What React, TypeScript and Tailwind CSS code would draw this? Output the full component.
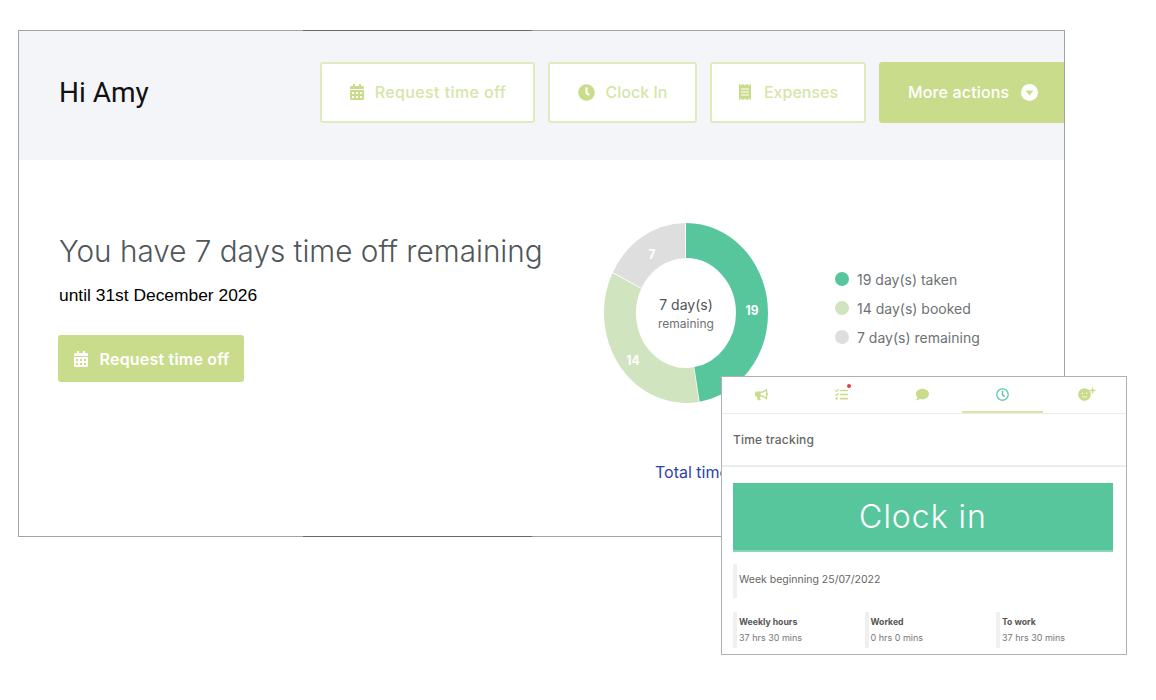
import { FaBullhorn, FaCalendarAlt, FaClock, FaComment, FaMeh, FaPlus, FaReceipt, FaRegClock, FaTasks } from "react-icons/fa";

const uiFont = "font-['Inter','Open_Sans',sans-serif]";

const RADIUS = 66;
const CIRC = 2 * Math.PI * RADIUS;

const slices = [
  { value: 19, start: 0, color: "#57c69c" },
  { value: 14, start: 19, color: "#d0e5bf" },
  { value: 7, start: 33, color: "#dedede" },
];

const legend = [
  { label: "19 day(s) taken", dot: "bg-[#57c69c]" },
  { label: "14 day(s) booked", dot: "bg-[#d0e5bf]" },
  { label: "7 day(s) remaining", dot: "bg-[#dedede]" },
];

const stats = [
  { title: "Weekly hours", value: "37 hrs 30 mins" },
  { title: "Worked", value: "0 hrs 0 mins" },
  { title: "To work", value: "37 hrs 30 mins" },
];

function Donut() {
  return (
    <div className="relative h-[180px] w-[164px]">
      {/* the chart in the picture is a bit taller than wide */}
      <svg width="164" height="180" viewBox="0 0 164 164" preserveAspectRatio="none">
        {slices.map((s) => (
          <circle
            key={s.start}
            cx="82"
            cy="82"
            r={RADIUS}
            fill="none"
            stroke={s.color}
            strokeWidth="32"
            strokeDasharray={`${(s.value / 40) * CIRC - 1} ${CIRC}`}
            transform={`rotate(${-90 + (s.start / 40) * 360} 82 82)`}
          />
        ))}
        <g fill="#fff" fontSize="12" fontWeight="700" textAnchor="middle" fontFamily="Inter, sans-serif">
          <text x="148" y="84">19</text>
          <text x="29" y="129">14</text>
          <text x="48" y="33">7</text>
        </g>
      </svg>
      <div className="absolute inset-0 flex flex-col items-center justify-center pt-[2px]">
        <span className="text-[14px] leading-[19px] text-[#4f5557]">7 day(s)</span>
        <span className="text-[12px] leading-[19px] text-[#6d7275]">remaining</span>
      </div>
    </div>
  );
}

function TabBar() {
  return (
    <div className="flex h-[37px] border-b border-[#ececec] text-[13px] text-[#c9dc8c]">
      <div className="flex w-[79px] items-center justify-center pb-[2px]"><FaBullhorn /></div>
      <div className="relative flex w-[81px] items-center justify-center pb-[2px]">
        <FaTasks />
        <span className="absolute left-[46px] top-[7px] h-[4px] w-[4px] rounded-full bg-[#e63f3f]" />
      </div>
      <div className="flex w-[80px] items-center justify-center pb-[2px]"><FaComment /></div>
      <div className="flex w-[81px] items-center justify-center border-b-2 border-[#d8e6a8] text-[#57c69c]"><FaRegClock /></div>
      <div className="relative flex w-[82px] items-center justify-center pb-[2px]">
        <FaMeh />
        <FaPlus className="absolute left-[46px] top-[10px] text-[7px]" />
      </div>
    </div>
  );
}

export default function App() {
  return (
    <div className={`relative h-[700px] w-[1156px] overflow-hidden bg-white pl-[18px] pt-[30px] ${uiFont}`}>
      <div className="relative h-[507px] w-[1047px] border border-[#a3a3a6]">
        <div className="flex h-[129px] items-center overflow-hidden bg-[#f4f5f9] pb-[7px] pl-[40px]">
          <h1 className="w-[261px] shrink-0 pt-[2px] font-['Roboto',sans-serif] text-[28px] text-[#111]">Hi Amy</h1>
          <div className="flex shrink-0 gap-[13px] text-[16px] font-medium text-[#d6e5a8]">
            <button className="flex h-[61px] w-[215px] items-center justify-center gap-[10px] rounded-[3px] border-2 border-[#e0ebbd] bg-white tracking-[0.4px]">
              <FaCalendarAlt className="text-[16px] text-[#c9dc8c]" />
              Request time off
            </button>
            <button className="flex h-[61px] w-[149px] items-center justify-center gap-[11px] rounded-[3px] border-2 border-[#e0ebbd] bg-white">
              <FaClock className="text-[17px] text-[#c9dc8c]" />
              Clock In
            </button>
            <button className="flex h-[61px] w-[156px] items-center justify-center gap-[11px] rounded-[3px] border-2 border-[#e0ebbd] bg-white pr-[1px]">
              <FaReceipt className="text-[16px] text-[#c9dc8c]" />
              Expenses
            </button>
            <button className="flex h-[61px] w-[190px] items-center gap-[12px] rounded-[3px] bg-[#c9dc8c] pl-[29px] tracking-[0.15px] text-white">
              More actions
              <svg width="17" height="17" viewBox="0 0 17 17">
                <circle cx="8.5" cy="8.5" r="8.5" fill="#fff" />
                <path d="M4.5 6.5h8l-4 5z" fill="#c9dc8c" />
              </svg>
            </button>
          </div>
        </div>

        <div className="flex pl-[39px] pt-[73px]">
          <div className="w-[546px]">
            <h2 className="ml-px text-[29.7px] font-light leading-[36px] text-[#50575a]">You have 7 days time off remaining</h2>
            <p className="ml-px mt-[17px] font-['Liberation_Sans',sans-serif] text-[17.4px] leading-[18px] text-black">until 31st December 2026</p>
            <button className="mt-[31px] flex h-[47px] w-[186px] items-center justify-center gap-[11px] rounded-[3px] bg-[#c9dc8c] text-[16px] font-semibold tracking-[0.2px] text-white">
              <FaCalendarAlt className="text-[16px]" />
              Request time off
            </button>
          </div>
          <div className="-mt-[10px]">
            <Donut />
            <a className="ml-[51px] mt-[59px] block text-[16px] leading-[20px] text-[#2c44a8]">Total time off</a>
          </div>
          <ul className="ml-[67px] flex flex-col gap-[9px] pt-[36px] text-[14px] text-[#6d7275]">
            {legend.map((item) => (
              <li key={item.label} className="flex h-[20px] items-center gap-[8px]">
                <span className={`h-[14px] w-[14px] rounded-full ${item.dot}`} />
                {item.label}
              </li>
            ))}
          </ul>
        </div>

        <div className="absolute -top-px left-[284px] h-px w-[229px] bg-[#66666b]" />
        <div className="absolute -bottom-px left-[284px] h-px w-[229px] bg-[#66666b]" />
      </div>

      <div className="absolute left-[721px] top-[376px] h-[279px] w-[406px] border border-[#b0b0b0] bg-white">
        <TabBar />
        <div className="flex h-[53px] items-center border-b-2 border-[#ececec] pl-[11px] text-[12px] font-medium tracking-[0.2px] text-[#666]">Time tracking</div>
        <div className="px-[11px] pt-[16px]">
          <button className="flex h-[69px] w-[380px] items-center justify-center border-b-2 border-[#8ad8bb] bg-[#57c69c] text-[32px] font-light tracking-[1px] text-white">Clock in</button>
          <div className="mt-[12px] flex h-[34px] items-center border-l-[4px] border-[#f0f0f0] pb-[2px] pl-[2px] text-[10.5px] text-[#666]">Week beginning 25/07/2022</div>
          <div className="mt-[14px] flex">
            {stats.map((s) => (
              <div key={s.title} className="h-[36px] w-[131.5px] shrink-0 border-l-[4px] border-[#f0f0f0] pl-[2px] pt-[3px] leading-[15px]">
                <div className="text-[8.7px] font-bold text-[#555]">{s.title}</div>
                <div className="text-[9px] text-[#777]">{s.value}</div>
              </div>
            ))}
          </div>
        </div>
      </div>
    </div>
  );
}
